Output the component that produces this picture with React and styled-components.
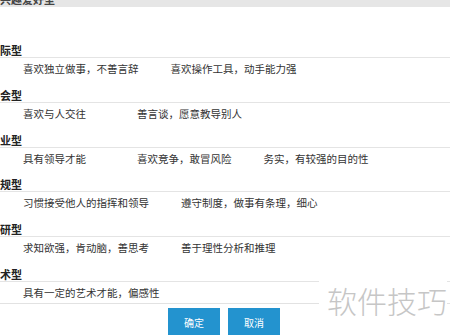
import React from "react";
import styled, { createGlobalStyle } from "styled-components";

const Global = createGlobalStyle`
  html, body { margin: 0; padding: 0; background: #fff; overflow: hidden; }
  body { font-family: "Noto Sans CJK SC", "Noto Sans", sans-serif; color: #333; }
`;

const Page = styled.div`
  position: relative;
  width: 450px;
  height: 335px;
  overflow: hidden;
  display: flex;
  flex-direction: column;
`;

const TopBar = styled.div`
  height: 7px;
  background: #e6e6e6;
  overflow: hidden;
  flex: none;
`;

const TopTitle = styled.div`
  margin-top: -7px;
  font-size: 11px;
  line-height: 12px;
  font-weight: bold;
  color: #444;
`;

const List = styled.div`
  margin-top: 36px;
  display: flex;
  flex-direction: column;
`;

const Section = styled.div`
  height: ${(p) => (p.$last ? "auto" : "44.8px")};
  display: flex;
  flex-direction: column;
`;

const Heading = styled.div`
  height: 14px;
  font-size: 11px;
  line-height: 14px;
  font-weight: bold;
  color: #222;
  border-bottom: 1px solid #e4e4e4;
  white-space: nowrap;
`;

const Row = styled.div`
  display: flex;
  padding: 5px 0 0 23px;
  height: ${(p) => (p.$last ? "16px" : "auto")};
  border-bottom: ${(p) => (p.$last ? "1px solid #e2e2e2" : "none")};
`;

const Item = styled.span`
  min-width: 82px;
  margin-right: 32px;
  font-size: 10.5px;
  line-height: 12px;
  color: #333;
  white-space: nowrap;
`;

const Buttons = styled.div`
  display: flex;
  justify-content: center;
  gap: 8px;
  margin-top: 4px;
  padding-right: 2px;
`;

const Button = styled.button`
  width: 52px;
  height: 30px;
  border: none;
  background: #2393cf;
  color: #fff;
  font-family: "Noto Sans CJK SC", sans-serif;
  font-size: 10px;
  padding: 0;
`;

const Watermark = styled.div`
  position: absolute;
  right: 3px;
  top: 280px;
  padding-left: 8px;
  background: #fff;
  font-size: 30px;
  line-height: 40px;
  font-weight: 300;
  color: #c6c6c6;
  letter-spacing: 0px;
`;

const sections = [
  { title: "际型", items: ["喜欢独立做事，不善言辞", "喜欢操作工具，动手能力强"] },
  { title: "会型", items: ["喜欢与人交往", "善言谈，愿意教导别人"] },
  { title: "业型", items: ["具有领导才能", "喜欢竞争，敢冒风险", "务实，有较强的目的性"] },
  { title: "规型", items: ["习惯接受他人的指挥和领导", "遵守制度，做事有条理，细心"] },
  { title: "研型", items: ["求知欲强，肯动脑，善思考", "善于理性分析和推理"] },
  { title: "术型", items: ["具有一定的艺术才能，偏感性"] },
];

export default function App() {
  return (
    <>
      <Global />
      <Page>
        <TopBar>
          <TopTitle>兴趣爱好型</TopTitle>
        </TopBar>
        <List>
          {sections.map((s, i) => {
            const last = i === sections.length - 1;
            return (
              <Section key={s.title} $last={last}>
                <Heading>{s.title}</Heading>
                <Row $last={last}>
                  {s.items.map((t) => (
                    <Item key={t}>{t}</Item>
                  ))}
                </Row>
              </Section>
            );
          })}
        </List>
        <Buttons>
          <Button>确定</Button>
          <Button>取消</Button>
        </Buttons>
        <Watermark>软件技巧</Watermark>
      </Page>
    </>
  );
}
